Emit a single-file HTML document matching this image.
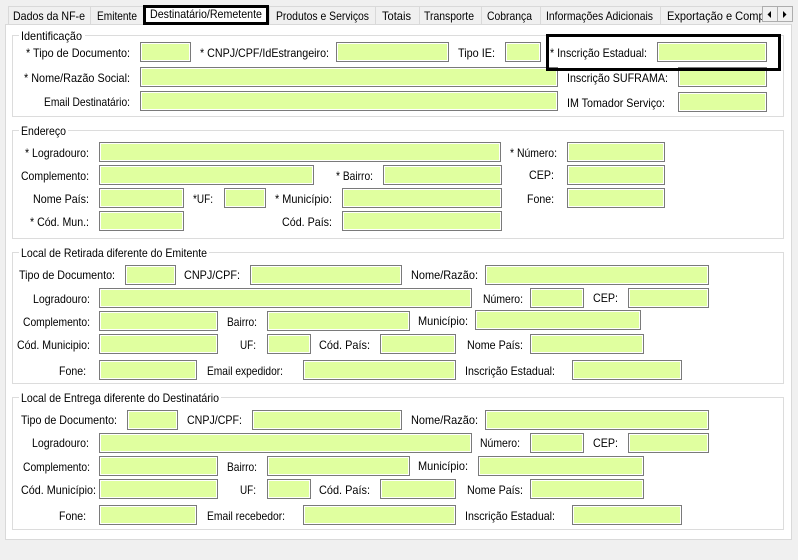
<!DOCTYPE html>
<html lang="pt"><head><meta charset="utf-8"><title>Destinatário/Remetente</title>
<style>
html,body{margin:0;padding:0;background:#fff}
#w{position:relative;width:802px;height:560px;overflow:hidden;background:#fff;font-family:"Liberation Sans",sans-serif}
#g{position:absolute;left:0;top:0;width:798px;height:560px;background:#f0f0f0}
.a{position:absolute;box-sizing:border-box}
.tab{position:absolute;top:6px;height:18px;box-sizing:border-box;border:1px solid #d9d9d9;border-bottom:0;border-right:0;background:#f0f0f0}
#p{position:absolute;left:5px;top:24px;width:787px;height:516px;box-sizing:border-box;border:1px solid #d9d9d9;background:#fff}
.f{position:absolute;left:12px;width:772px;box-sizing:border-box;border:1px solid #dcdcdc}
.l{position:absolute;background:#fff;height:6px}
i{position:absolute;display:block;height:20px;box-sizing:border-box;border:1px solid #7a7a7a;box-shadow:inset 0 0 0 1px #fff;background:#e0ff9f}
svg{position:absolute;left:0;top:0}
text{font-family:"Liberation Sans",sans-serif;font-size:12px;fill:#000}
.b{position:absolute;box-sizing:border-box;border:3px solid #000}
</style></head><body><div id="w"><div id="g"></div>
<div class="tab" style="left:8px;width:82px"></div>
<div class="tab" style="left:90px;width:53px"></div>
<div class="tab" style="left:269px;width:106px"></div>
<div class="tab" style="left:375px;width:44px"></div>
<div class="tab" style="left:419px;width:62px"></div>
<div class="tab" style="left:481px;width:59px"></div>
<div class="tab" style="left:540px;width:120px"></div>
<div class="tab" style="left:660px;width:102px"></div>
<div id="p"></div>
<div class="a" style="left:143px;top:5px;width:126px;height:20px;background:#fff"></div>

<div class="f" style="top:35px;height:82px"></div>
<div class="f" style="top:130px;height:109px"></div>
<div class="f" style="top:252px;height:132px"></div>
<div class="f" style="top:397px;height:133px"></div>
<div class="l" style="left:19px;top:33px;width:66px"></div>
<div class="l" style="left:19px;top:128px;width:49px"></div>
<div class="l" style="left:19px;top:250px;width:190px"></div>
<div class="l" style="left:19px;top:395px;width:202px"></div>

<i style="left:140px;top:42px;width:51px"></i>
<i style="left:336px;top:42px;width:113px"></i>
<i style="left:505px;top:42px;width:36px"></i>
<i style="left:657px;top:42px;width:110px"></i>
<i style="left:140px;top:67px;width:418px"></i>
<i style="left:678px;top:67px;width:89px"></i>
<i style="left:140px;top:91px;width:418px"></i>
<i style="left:678px;top:92px;width:89px"></i>

<i style="left:99px;top:142px;width:402px"></i>
<i style="left:567px;top:142px;width:98px"></i>
<i style="left:99px;top:165px;width:215px"></i>
<i style="left:383px;top:165px;width:119px"></i>
<i style="left:567px;top:165px;width:98px"></i>
<i style="left:99px;top:188px;width:85px"></i>
<i style="left:224px;top:188px;width:42px"></i>
<i style="left:342px;top:188px;width:160px"></i>
<i style="left:567px;top:188px;width:98px"></i>
<i style="left:99px;top:211px;width:85px"></i>
<i style="left:342px;top:211px;width:160px"></i>

<i style="left:125px;top:265px;width:51px"></i>
<i style="left:250px;top:265px;width:152px"></i>
<i style="left:485px;top:265px;width:224px"></i>
<i style="left:99px;top:288px;width:373px"></i>
<i style="left:530px;top:288px;width:54px"></i>
<i style="left:628px;top:288px;width:81px"></i>
<i style="left:99px;top:311px;width:119px"></i>
<i style="left:267px;top:311px;width:143px"></i>
<i style="left:475px;top:310px;width:166px"></i>
<i style="left:99px;top:334px;width:119px"></i>
<i style="left:267px;top:334px;width:44px"></i>
<i style="left:380px;top:334px;width:76px"></i>
<i style="left:530px;top:334px;width:114px"></i>
<i style="left:99px;top:360px;width:98px"></i>
<i style="left:303px;top:360px;width:153px"></i>
<i style="left:572px;top:360px;width:110px"></i>

<i style="left:127px;top:410px;width:51px"></i>
<i style="left:252px;top:410px;width:150px"></i>
<i style="left:485px;top:410px;width:224px"></i>
<i style="left:99px;top:433px;width:373px"></i>
<i style="left:530px;top:433px;width:54px"></i>
<i style="left:628px;top:433px;width:81px"></i>
<i style="left:99px;top:456px;width:119px"></i>
<i style="left:267px;top:456px;width:143px"></i>
<i style="left:478px;top:456px;width:166px"></i>
<i style="left:99px;top:479px;width:119px"></i>
<i style="left:267px;top:479px;width:44px"></i>
<i style="left:380px;top:479px;width:76px"></i>
<i style="left:530px;top:479px;width:114px"></i>
<i style="left:99px;top:505px;width:98px"></i>
<i style="left:303px;top:505px;width:153px"></i>
<i style="left:572px;top:505px;width:110px"></i>

<svg width="802" height="560" viewBox="0 0 802 560">
<text x="13" y="20" textLength="72" lengthAdjust="spacingAndGlyphs">Dados da NF-e</text>
<text x="97" y="20" textLength="40" lengthAdjust="spacingAndGlyphs">Emitente</text>
<text x="150" y="18" textLength="112" lengthAdjust="spacingAndGlyphs">Destinatário/Remetente</text>
<text x="276" y="20" textLength="93" lengthAdjust="spacingAndGlyphs">Produtos e Serviços</text>
<text x="382" y="20" textLength="29" lengthAdjust="spacingAndGlyphs">Totais</text>
<text x="424" y="20" textLength="50" lengthAdjust="spacingAndGlyphs">Transporte</text>
<text x="487" y="20" textLength="45" lengthAdjust="spacingAndGlyphs">Cobrança</text>
<text x="546" y="20" textLength="107" lengthAdjust="spacingAndGlyphs">Informações Adicionais</text>
<text x="667" y="20" textLength="113" lengthAdjust="spacingAndGlyphs">Exportação e Compras</text>
<rect x="762" y="6" width="31" height="16" fill="#f0f0f0"/>
<rect x="762.5" y="6.5" width="15" height="15" fill="#f0f0f0" stroke="#adadad"/>
<rect x="777.5" y="6.5" width="15" height="15" fill="#f0f0f0" stroke="#adadad"/>
<path d="M767.5 14.5L771 11V18Z" fill="#000"/>
<path d="M783 11V18L786.5 14.5Z" fill="#000"/>

<text x="21" y="40" textLength="61" lengthAdjust="spacingAndGlyphs">Identificação</text>
<text x="26" y="57" textLength="104" lengthAdjust="spacingAndGlyphs">* Tipo de Documento:</text>
<text x="200" y="57" textLength="129" lengthAdjust="spacingAndGlyphs">* CNPJ/CPF/IdEstrangeiro:</text>
<text x="458" y="57" textLength="37" lengthAdjust="spacingAndGlyphs">Tipo IE:</text>
<text x="550" y="57" textLength="97" lengthAdjust="spacingAndGlyphs">* Inscrição Estadual:</text>
<text x="24" y="82" textLength="106" lengthAdjust="spacingAndGlyphs">* Nome/Razão Social:</text>
<text x="567" y="82" textLength="101" lengthAdjust="spacingAndGlyphs">Inscrição SUFRAMA:</text>
<text x="44" y="106" textLength="86" lengthAdjust="spacingAndGlyphs">Email Destinatário:</text>
<text x="567" y="107" textLength="98" lengthAdjust="spacingAndGlyphs">IM Tomador Serviço:</text>

<text x="21" y="135" textLength="45" lengthAdjust="spacingAndGlyphs">Endereço</text>
<text x="25" y="157" textLength="64" lengthAdjust="spacingAndGlyphs">* Logradouro:</text>
<text x="510" y="157" textLength="47" lengthAdjust="spacingAndGlyphs">* Número:</text>
<text x="21" y="180" textLength="68" lengthAdjust="spacingAndGlyphs">Complemento:</text>
<text x="336" y="180" textLength="37" lengthAdjust="spacingAndGlyphs">* Bairro:</text>
<text x="529" y="179" textLength="25" lengthAdjust="spacingAndGlyphs">CEP:</text>
<text x="33" y="203" textLength="56" lengthAdjust="spacingAndGlyphs">Nome País:</text>
<text x="193" y="203" textLength="20" lengthAdjust="spacingAndGlyphs">*UF:</text>
<text x="275" y="203" textLength="57" lengthAdjust="spacingAndGlyphs">* Município:</text>
<text x="527" y="203" textLength="27" lengthAdjust="spacingAndGlyphs">Fone:</text>
<text x="30" y="226" textLength="59" lengthAdjust="spacingAndGlyphs">* Cód. Mun.:</text>
<text x="282" y="226" textLength="50" lengthAdjust="spacingAndGlyphs">Cód. País:</text>

<text x="21" y="257" textLength="186" lengthAdjust="spacingAndGlyphs">Local de Retirada diferente do Emitente</text>
<text x="19" y="279" textLength="96" lengthAdjust="spacingAndGlyphs">Tipo de Documento:</text>
<text x="184" y="279" textLength="56" lengthAdjust="spacingAndGlyphs">CNPJ/CPF:</text>
<text x="411" y="279" textLength="67" lengthAdjust="spacingAndGlyphs">Nome/Razão:</text>
<text x="33" y="303" textLength="57" lengthAdjust="spacingAndGlyphs">Logradouro:</text>
<text x="483" y="303" textLength="40" lengthAdjust="spacingAndGlyphs">Número:</text>
<text x="593" y="302" textLength="25" lengthAdjust="spacingAndGlyphs">CEP:</text>
<text x="23" y="326" textLength="67" lengthAdjust="spacingAndGlyphs">Complemento:</text>
<text x="227" y="326" textLength="30" lengthAdjust="spacingAndGlyphs">Bairro:</text>
<text x="418" y="325" textLength="50" lengthAdjust="spacingAndGlyphs">Município:</text>
<text x="17" y="349" textLength="73" lengthAdjust="spacingAndGlyphs">Cód. Municipio:</text>
<text x="240" y="349" textLength="16" lengthAdjust="spacingAndGlyphs">UF:</text>
<text x="319" y="349" textLength="51" lengthAdjust="spacingAndGlyphs">Cód. País:</text>
<text x="467" y="349" textLength="56" lengthAdjust="spacingAndGlyphs">Nome País:</text>
<text x="59" y="375" textLength="27" lengthAdjust="spacingAndGlyphs">Fone:</text>
<text x="207" y="375" textLength="76" lengthAdjust="spacingAndGlyphs">Email expedidor:</text>
<text x="465" y="375" textLength="90" lengthAdjust="spacingAndGlyphs">Inscrição Estadual:</text>

<text x="21" y="402" textLength="198" lengthAdjust="spacingAndGlyphs">Local de Entrega diferente do Destinatário</text>
<text x="21" y="424" textLength="96" lengthAdjust="spacingAndGlyphs">Tipo de Documento:</text>
<text x="187" y="424" textLength="55" lengthAdjust="spacingAndGlyphs">CNPJ/CPF:</text>
<text x="411" y="424" textLength="67" lengthAdjust="spacingAndGlyphs">Nome/Razão:</text>
<text x="32" y="447" textLength="57" lengthAdjust="spacingAndGlyphs">Logradouro:</text>
<text x="480" y="447" textLength="40" lengthAdjust="spacingAndGlyphs">Número:</text>
<text x="593" y="447" textLength="25" lengthAdjust="spacingAndGlyphs">CEP:</text>
<text x="23" y="471" textLength="67" lengthAdjust="spacingAndGlyphs">Complemento:</text>
<text x="227" y="471" textLength="30" lengthAdjust="spacingAndGlyphs">Bairro:</text>
<text x="418" y="470" textLength="50" lengthAdjust="spacingAndGlyphs">Município:</text>
<text x="21" y="494" textLength="75" lengthAdjust="spacingAndGlyphs">Cód. Município:</text>
<text x="240" y="494" textLength="16" lengthAdjust="spacingAndGlyphs">UF:</text>
<text x="319" y="494" textLength="51" lengthAdjust="spacingAndGlyphs">Cód. País:</text>
<text x="467" y="494" textLength="56" lengthAdjust="spacingAndGlyphs">Nome País:</text>
<text x="59" y="520" textLength="27" lengthAdjust="spacingAndGlyphs">Fone:</text>
<text x="207" y="520" textLength="78" lengthAdjust="spacingAndGlyphs">Email recebedor:</text>
<text x="465" y="520" textLength="90" lengthAdjust="spacingAndGlyphs">Inscrição Estadual:</text>
</svg>
<div class="b" style="left:143px;top:5px;width:126px;height:20px"></div>
<div class="b" style="left:546px;top:34px;width:235px;height:37px"></div>
</div></body></html>
